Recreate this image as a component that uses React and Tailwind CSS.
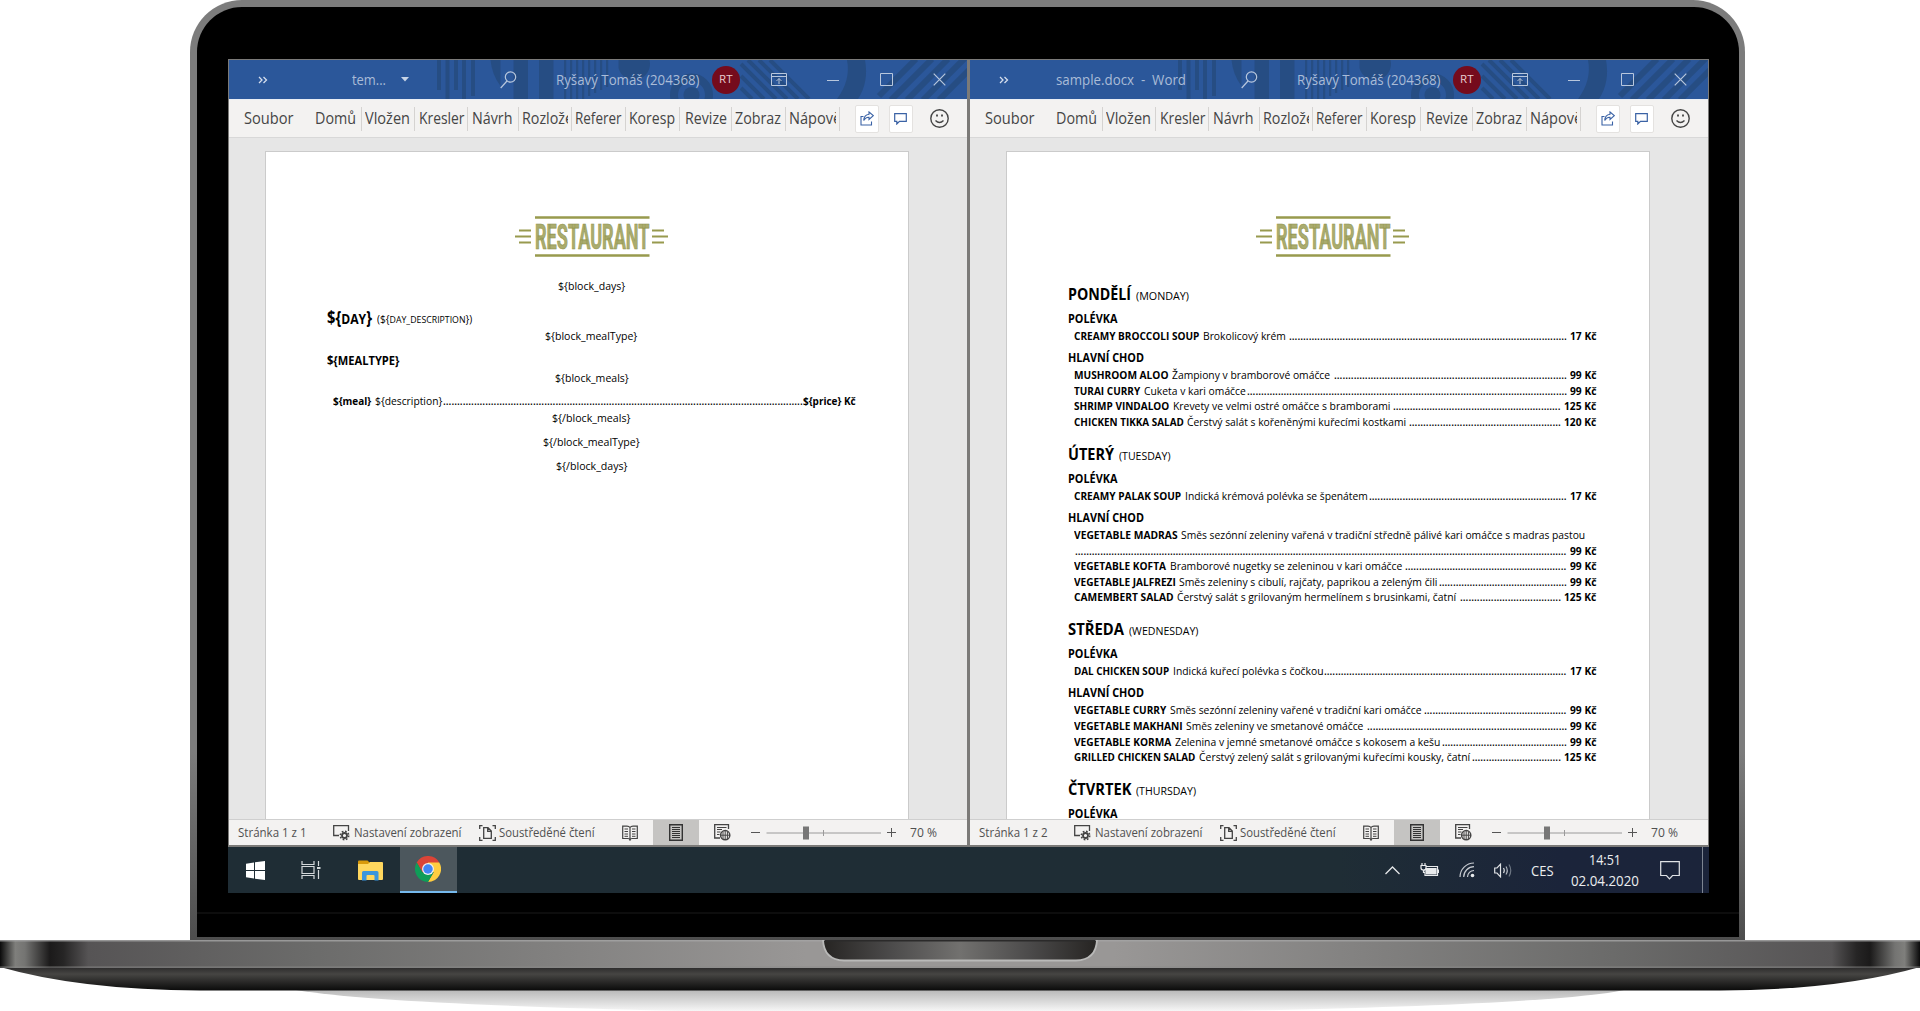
import { useLayoutEffect, useRef, useState } from "react";

/* One line of text, stretched or condensed horizontally to a given width. */
function Fit({ w, className = "", children }) {
  const ref = useRef(null);
  const [k, setK] = useState(1);
  useLayoutEffect(() => {
    const n = ref.current.getBoundingClientRect().width;
    if (n) setK((w / n) * k);
  }, [w, children]);
  return (
    <span className={"block shrink-0 whitespace-pre " + className} style={{ width: w }}>
      <span ref={ref} className="inline-block origin-left" style={{ transform: `scaleX(${k})` }}>
        {children}
      </span>
    </span>
  );
}

const FINE_LINES = [335, 341, 347, 353, 359, 365, 371, 377];

function TitlePattern() {
  return (
    <svg className="absolute inset-0" width="738" height="39" viewBox="0 0 738 39" fill="#264d83">
      <rect x="208" width="4" height="30" />
      <rect x="216.5" width="4" height="39" />
      <rect x="225" width="4" height="30" />
      <rect x="233" width="4" height="39" />
      <rect x="242" width="4" height="36" />
      <path d="M261.5 0H271.500V26Q263 15 261.500 0Z" />
      <rect x="284.500" width="14.500" height="39" />
      <rect x="310" width="14.500" height="39" />
      {FINE_LINES.map((x, i) => (
        <rect key={x} x={x} width="2.200" height={i < 4 ? 39 : 39 - (i - 3) * 3} />
      ))}
      <path d="M389.500 0H420.500A16 16 0 0 1 389.500 8Z" />
      <circle cx="462.500" cy="35" r="17.500" fill="none" stroke="#264d83" strokeWidth="8" />
      <circle cx="462.500" cy="35" r="8" />
      <g stroke="#264d83" strokeWidth="4">
        <path d="M512 4L547 39M519 0L558 39M530 0L569 39M541 0L580 39M512 16L535 39M512 28L523 39" />
      </g>
      <path d="M618 0H636Q640 22 629 39H608Q622 20 618 0Z" />
      <g stroke="#264d83" strokeWidth="6">
        <path d="M650 36L687 -1M662 40L703 -1M678 40L719 -1M694 40L738 -4M710 40L740 10" />
      </g>
    </svg>
  );
}

function TitleBar({ title }) {
  return (
    <div className="relative h-[39px] bg-[#2b579a] text-[14px] text-[#aabcd7]">
      <TitlePattern />
      <div className="relative flex h-[39px] items-center">
        <svg className="ml-[29px] mt-px" width="10" height="8" viewBox="0 0 10 8" fill="none" stroke="#d5deed" strokeWidth="1.300">
          <path d="M1 1L4 4L1 7M5.500 1L8.500 4L5.500 7" />
        </svg>
        {title ? (
          <div className="ml-[47px] flex w-[185px]">
            <Fit w={130}>{title}</Fit>
          </div>
        ) : (
          <div className="ml-[84px] flex w-[148px] items-center">
            <Fit w={34}>tem...</Fit>
            <svg className="ml-[15px]" width="8" height="5" viewBox="0 0 8 5" fill="#c8d4e6"><path d="M0 0H8L4 4.500Z" /></svg>
          </div>
        )}
        <svg width="17" height="18" viewBox="0 0 17 18" fill="none" stroke="#b8c7dd" strokeWidth="1.200">
          <circle cx="10.500" cy="6" r="5.200" />
          <path d="M7 10L0.700 17" />
        </svg>
        <Fit w={143.500} className="ml-[39px]">Ryšavý Tomáš (204368)</Fit>
        <div className="ml-[12px] flex size-[28px] items-center justify-center rounded-full bg-[#750b1c] text-[11px] text-[#e6ccd0]">
          <Fit w={13.500}>RT</Fit>
        </div>
        <svg className="ml-[31px]" width="16" height="13" viewBox="0 0 16 13" fill="none" stroke="#b8c7dd">
          <path d="M.5 .5H15.500V12.500H.5ZM.5 3.500H15.500M8 11V5.500M5.500 8L8 5.500L10.500 8" />
        </svg>
        <svg className="ml-[40px]" width="12" height="13" viewBox="0 0 12 13" stroke="#b8c7dd"><path d="M0 7.500H12" /></svg>
        <svg className="ml-[41px]" width="13" height="13" viewBox="0 0 13 13" fill="none" stroke="#b8c7dd"><path d="M.5 .5H12.500V12.500H.5Z" /></svg>
        <svg className="ml-[40px]" width="13" height="13" viewBox="0 0 13 13" fill="none" stroke="#b8c7dd" strokeWidth="1.200"><path d="M.7 .7L12.300 12.300M12.300 .7L.7 12.300" /></svg>
      </div>
    </div>
  );
}

/* label, text width, box width up to and including the separator, left padding */
const TABS = [
  ["Domů", 41, 47, 0],
  ["Vložen", 45, 53, 3.500],
  ["Kresler", 45.500, 53, 4],
  ["Návrh", 40.500, 51, 4.500],
  ["Rozlož", 43, 53, 3.500, "e"],
  ["Referer", 46.500, 54, 3.500],
  ["Koresp", 46, 54, 3.500],
  ["Revize", 42, 52, 5],
  ["Zobraz", 46, 54, 3.500],
  ["Nápov", 44, 54, 3.500, "ě"],
];

function Tabs() {
  return (
    <div className="flex h-[38px] items-center border-b border-[#d8d8d8] bg-[#f3f2f1] text-[15.500px] text-[#454545]">
      <Fit w={49.500} className="ml-[15px]">Soubor</Fit>
      <div className="ml-[21px] flex">
        {TABS.map(([label, w, box, pad, cut]) => (
          <div key={label} className="flex h-[24px] items-center border-r border-[#d5d3d1]" style={{ width: box, paddingLeft: pad }}>
            <Fit w={w}>{label}</Fit>
            {cut && <span className="w-[2.500px] overflow-hidden">{cut}</span>}
          </div>
        ))}
      </div>
      <div className="ml-[15px] flex h-[28px] w-[24px] items-center justify-center rounded-[2px] border border-[#e4e2e0] bg-white">
        <svg width="14" height="15" viewBox="0 0 14 15" fill="none" stroke="#3a62a5" strokeWidth="1.100">
          <path d="M3.500 5.500H1V14H11.500V10.500" />
          <path d="M9 1L13.300 4.700L9 8.500V6.200Q5.500 6 3.700 9.500Q4 4 9 3.300Z" />
        </svg>
      </div>
      <div className="ml-[10px] flex h-[28px] w-[24px] items-center justify-center rounded-[2px] border border-[#e4e2e0] bg-white">
        <svg width="13" height="12" viewBox="0 0 13 12" fill="none" stroke="#3a62a5" strokeWidth="1.200">
          <path d="M.7 .7H12.300V8.300H5.500L2.800 11V8.300H.7Z" />
        </svg>
      </div>
      <svg className="ml-[17px]" width="19" height="19" viewBox="0 0 19 19" fill="none" stroke="#444" strokeWidth="1.400">
        <circle cx="9.500" cy="9.500" r="8.700" />
        <path d="M5.500 11.500Q9.500 15.500 13.500 11.500" />
        <path d="M7 5.500V7.500M12 5.500V7.500" strokeWidth="1.800" />
      </svg>
    </div>
  );
}

function Logo() {
  return (
    <svg className="mx-auto block" width="153" height="41" viewBox="0 0 153 41">
      <g stroke="#989a4e" strokeWidth="2">
        <path d="M20 1.500H134.500M20 39.500H134.500" strokeWidth="2.400" />
        <path d="M4 14.500H16M0 20.500H16M4 26.500H16M137 14.500H149M137 20.500H153M137 26.500H149" />
      </g>
      <text x="20" y="33" textLength="114.500" lengthAdjust="spacingAndGlyphs" fontFamily="Roboto, sans-serif" fontWeight="700" fontSize="35" fill="#aaac6e" stroke="#90924a" strokeWidth=".7">
        RESTAURANT
      </text>
    </svg>
  );
}

/* Dotted tab leader filling the space between a text and its price. */
function Leader({ gap }) {
  const ref = useRef(null);
  const [w, setW] = useState(0);
  useLayoutEffect(() => setW(ref.current.getBoundingClientRect().width), []);
  return (
    <span ref={ref} className="block min-w-0 flex-1 font-semibold" style={{ marginLeft: gap }}>
      {w > 0 && <Fit w={w}>{".".repeat(Math.round(w / 2.8))}</Fit>}
    </span>
  );
}

function Price({ value }) {
  const long = value > 99;
  return <Fit w={long ? 32.300 : 26.500} className="ml-[3.300px] font-bold">{value + " Kč"}</Fit>;
}

function Meal({ name, nw, text, tw, gap, price }) {
  const wraps = gap === null;
  return (
    <>
      <div className="ml-[6px] flex h-[15.670px] items-center">
        <Fit w={nw} className="mr-[3.300px] font-bold">{name}</Fit>
        <Fit w={tw}>{text}</Fit>
        {!wraps && <Leader gap={gap} />}
        {!wraps && <Price value={price} />}
      </div>
      {wraps && (
        <div className="ml-[6px] flex h-[15.670px] items-center">
          <Leader gap={1} />
          <Price value={price} />
        </div>
      )}
    </>
  );
}

const MENU = [
  { day: "PONDĚLÍ", dw: 63, en: "(MONDAY)", ew: 53,
    soup: ["CREAMY BROCCOLI SOUP", 125.400, "Brokolicový krém", 82.900, 2.900, 17],
    main: [
      ["MUSHROOM ALOO", 94.500, "Žampiony v bramborové omáčce", 158.100, 3.600, 99],
      ["TURAI CURRY", 66.200, "Cuketa v kari omáčce", 101.800, 1, 99],
      ["SHRIMP VINDALOO", 95.200, "Krevety ve velmi ostré omáčce s bramborami", 217.400, 3.300, 125],
      ["CHICKEN TIKKA SALAD", 109.800, "Čerstvý salát s kořeněnými kuřecími kostkami", 219.200, 2.500, 120],
    ] },
  { day: "ÚTERÝ", dw: 46, en: "(TUESDAY)", ew: 51.500,
    soup: ["CREAMY PALAK SOUP", 107.200, "Indická krémová polévka se špenátem", 182.800, 1.500, 17],
    main: [
      ["VEGETABLE MADRAS", 103.600, "Směs sezónní zeleniny vařená v tradiční středně pálivé kari omáčce s madras pastou", 404.200, null, 99],
      ["VEGETABLE KOFTA", 92, "Bramborové nugetky se zeleninou v kari omáčce", 232.300, 3.600, 99],
      ["VEGETABLE JALFREZI", 101.800, "Směs zeleniny s cibulí, rajčaty, paprikou a zeleným čili", 258.500, 1, 99],
      ["CAMEMBERT SALAD", 99.600, "Čerstvý salát s grilovaným hermelínem s brusinkami, čatní", 279.200, 3.600, 125],
    ] },
  { day: "STŘEDA", dw: 56, en: "(WEDNESDAY)", ew: 69.500,
    soup: ["DAL CHICKEN SOUP", 95.200, "Indická kuřecí polévka s čočkou", 150.500, 1, 17],
    main: [
      ["VEGETABLE CURRY", 92.300, "Směs sezónní zeleniny vařené v tradiční kari omáčce", 251.500, 2.900, 99],
      ["VEGETABLE MAKHANI", 108.700, "Směs zeleniny ve smetanové omáčce", 177.400, 2.900, 99],
      ["VEGETABLE KORMA", 97.400, "Zelenina v jemné smetanové omáčce s kokosem a kešu", 265.400, 1.500, 99],
      ["GRILLED CHICKEN SALAD", 121.400, "Čerstvý zelený salát s grilovanými kuřecími kousky, čatní", 271.200, 1.800, 125],
    ] },
  { day: "ČTVRTEK", dw: 63.500, en: "(THURSDAY)", ew: 60, main: [] },
];

const toMeal = (m) => ({ name: m[0], nw: m[1], text: m[2], tw: m[3], gap: m[4], price: m[5] });

function MenuPage() {
  return (
    <div className="pt-[23.800px]">
      {MENU.map((d) => (
        <section key={d.day} className="mb-[10px]">
          <div className="flex h-[28px] items-baseline">
            <Fit w={d.dw} className="text-[16px] leading-[26px] font-bold">{d.day}</Fit>
            <Fit w={d.ew} className="ml-[4.500px] text-[11px]">{d.en}</Fit>
          </div>
          <Fit w={49.500} className="text-[12.500px] leading-[20px] font-bold">POLÉVKA</Fit>
          {d.soup && <Meal {...toMeal(d.soup)} />}
          {d.soup && <Fit w={76} className="mt-[3.500px] text-[12.500px] leading-[20px] font-bold">HLAVNÍ CHOD</Fit>}
          {d.main.map((m) => <Meal key={m[0]} {...toMeal(m)} />)}
        </section>
      ))}
    </div>
  );
}

function Tag({ w, children }) {
  return <Fit w={w} className="mx-auto h-[16px] leading-[16px]">{children}</Fit>;
}

function TemplatePage() {
  return (
    <div className="pt-[21.300px]">
      <Tag w={67.300}>{"${block_days}"}</Tag>
      <div className="mt-[13.500px] flex h-[20px] items-center">
        <Fit w={45} className="text-[17px] font-bold">{"${"}<span className="text-[14px]">DAY</span>{"}"}</Fit>
        <Fit w={95.300} className="mt-[2px] ml-[4.400px] text-[11px]">{"(${"}<span className="text-[9.500px]">DAY_DESCRIPTION</span>{"})"}</Fit>
      </div>
      <Tag w={92.300}>{"${block_mealType}"}</Tag>
      <Fit w={72.500} className="mt-[8px] h-[18px] text-[12.500px] leading-[18px] font-bold">{"${MEALTYPE}"}</Fit>
      <Tag w={73.800}>{"${block_meals}"}</Tag>
      <div className="mt-[8px] ml-[6px] flex h-[16px] items-center">
        <Fit w={38.200} className="mr-[3.300px] font-bold">{"${meal}"}</Fit>
        <Fit w={67.300}>{"${description}"}</Fit>
        <Leader gap={0.500} />
        <Fit w={52.700} className="ml-[0.500px] font-bold">{"${price} Kč"}</Fit>
      </div>
      <Tag w={78.500}>{"${/block_meals}"}</Tag>
      <div className="h-[8px]" />
      <Tag w={96.700}>{"${/block_mealType}"}</Tag>
      <div className="h-[8px]" />
      <Tag w={71.600}>{"${/block_days}"}</Tag>
    </div>
  );
}

function StatusBar({ page }) {
  return (
    <div className="flex h-[26px] items-center border-t border-[#cfcfcf] bg-[#f3f2f1] text-[12px] text-[#505050]">
      <Fit w={68.600} className="ml-[8.500px]">{page}</Fit>
      <svg className="ml-[27px]" width="17" height="16" viewBox="0 0 17 16" fill="none" stroke="#444" strokeWidth="1.300">
        <path d="M6 10.500H.7V.7H15.500V6" />
        <circle cx="11.500" cy="10.500" r="2.500" strokeWidth="1.800" />
        <circle cx="11.500" cy="10.500" r="4.200" strokeWidth="1.600" strokeDasharray="1.700 1.600" />
      </svg>
      <Fit w={107.500} className="ml-[3.500px]">Nastavení zobrazení</Fit>
      <svg className="ml-[18px]" width="17" height="16" viewBox="0 0 17 16" fill="none" stroke="#444" strokeWidth="1.300">
        <path d="M3.500 .7H.7V4M13.500 .7H16.300V4M3.500 15.300H.7V12M13.500 15.300H16.300V12" />
        <path d="M4.700 2.700H9L12.300 6V13.300H4.700ZM8.700 3V6.300H12" />
      </svg>
      <Fit w={95.500} className="ml-[3px]">Soustředěné čtení</Fit>
      <svg className="ml-[27px]" width="16" height="16" viewBox="0 0 16 16" fill="none" stroke="#444">
        <path d="M8 2.500Q7 1.200 5 1.200H.7V13.500H6Q7.500 13.500 8 15Q8.500 13.500 10 13.500H15.300V1.200H11Q9 1.200 8 2.500V14" strokeWidth="1.200" />
        <path d="M2.500 4H6M2.500 6.500H6M2.500 9H6M2.500 11.300H6M10 4H13.500M10 6.500H13.500M10 9H13.500M10 11.300H13.500" />
      </svg>
      <div className="ml-[15.500px] flex h-[25px] w-[46px] items-center justify-center bg-[#c5c4c2]">
        <svg width="14" height="17" viewBox="0 0 14 17" fill="none" stroke="#333">
          <path d="M.7 .7H13.300V16.300H.7Z" strokeWidth="1.400" />
          <path d="M3 3.500H11M3 5.500H11M3 7.500H11M3 9.500H11M3 11.500H11M3 13.500H11" />
        </svg>
      </div>
      <svg className="ml-[15px]" width="17" height="17" viewBox="0 0 17 17" fill="none" stroke="#444">
        <path d="M6 14H.7V.7H14.500V5" strokeWidth="1.300" />
        <path d="M3 3.500H12.500M3 5.500H8M3 8H6.500M3 10.500H5.500" />
        <circle cx="11.200" cy="11.200" r="4.600" strokeWidth="1.500" />
        <path d="M11.200 6.600V15.800M6.600 11.200H15.800M9 7.500V15M13.400 7.500V15" />
      </svg>
      <svg className="ml-[20px]" width="146" height="14" viewBox="0 0 146 14" stroke="#777">
        <path d="M0 6.500H9M136 6.500H145M140.500 2V11" stroke="#555" />
        <path d="M15.500 7H130" stroke="#9a9a9a" />
        <path d="M72.500 4V10" stroke="#9a9a9a" />
        <rect x="52" y=".5" width="6" height="13" fill="#777" stroke="none" />
      </svg>
      <Fit w={27} className="ml-[13px]">70 %</Fit>
    </div>
  );
}

function WordWindow({ title, status, children }) {
  return (
    <div className="flex h-[785px] w-[738px] shrink-0 flex-col overflow-hidden bg-[#e6e6e6]">
      <TitleBar title={title} />
      <div className="h-px bg-[#e9edf4]" />
      <Tabs />
      <div className="min-h-0 flex-1 overflow-hidden">
        <div className="mt-[13px] ml-[36px] h-[800px] w-[644px] border border-[#cbcbcb] bg-white pt-[64px] pr-[52.500px] pl-[61.300px] font-['Open_Sans','Noto_Sans',sans-serif] text-[10.300px] text-black">
          <Logo />
          {children}
        </div>
      </div>
      <StatusBar page={status} />
    </div>
  );
}

function Taskbar() {
  return (
    <div className="flex h-[46px] items-center bg-linear-to-r from-[#1f2d35] from-75% to-[#1b243a] to-90% text-[14px] text-[#eceef0]">
      <svg className="ml-[18px]" width="19" height="19" viewBox="0 0 19 19" fill="#fff">
        <path d="M0 2.700L8 1.500V9H0ZM9 1.300L19 0V9H9ZM0 10H8V17.500L0 16.300ZM9 10H19V19L9 17.700Z" />
      </svg>
      <svg className="ml-[36px]" width="20" height="18" viewBox="0 0 20 18" fill="none" stroke="#d5d9db" strokeWidth="1.200">
        <path d="M1 0V3.500H13V0M1 5.500H13V12.500H1ZM1 18V14.500H13V18M17.500 0V5M17.500 9V18" />
        <path d="M16 7H19.500" strokeWidth="2" />
      </svg>
      <svg className="ml-[37px]" width="25" height="21" viewBox="0 0 25 21">
        <path d="M0 1.500Q0 .5 1 .5H9.500L11.500 2.500V6H0Z" fill="#d99a0b" />
        <path d="M0 4H10L12 2H24Q25 2 25 3V19Q25 20 24 20H1Q0 20 0 19Z" fill="#ffd75e" />
        <path d="M4 12.500Q4 11 5.500 11H19Q20.500 11 20.500 12.500V20.500H16.500V16Q16.500 15 15.500 15H9.500Q8.500 15 8.500 16V20.500H4Z" fill="#3a96dd" />
      </svg>
      <div className="ml-[17px] flex h-[46px] w-[57px] items-center justify-center border-b-2 border-[#76b9ed] bg-[#4c575d] pr-px">
        <svg width="26" height="26" viewBox="0 0 48 48">
          <path d="M3.200 12A24 24 0 0 1 44.800 12L24 24L13.600 30Z" fill="#db4437" />
          <path d="M44.800 12A24 24 0 0 1 24 48L34.400 30L24 24V12Z" fill="#ffcd40" />
          <path d="M3.200 12A24 24 0 0 0 24 48L34.400 30H13.600Z" fill="#0f9d58" />
          <circle cx="24" cy="24" r="11" fill="#f1f1f1" />
          <circle cx="24" cy="24" r="8.800" fill="#4285f4" />
        </svg>
      </div>
      <svg className="ml-[928px]" width="15" height="9" viewBox="0 0 15 9" fill="none" stroke="#e4e6e8" strokeWidth="1.300"><path d="M.5 8L7.500 1L14.500 8" /></svg>
      <svg className="ml-[20px]" width="19" height="14" viewBox="0 0 19 14" fill="none" stroke="#e8eaec" strokeWidth="1.200">
        <path d="M5 3.500H17.500V12.500H5Z" />
        <path d="M6.500 5.500H16V11H6.500Z" fill="#e8eaec" />
        <path d="M18.500 6.500V10" />
        <path d="M1 2.500H6V5Q6 7 3.500 7Q1 7 1 5ZM2 0V2.500M5 0V2.500M3.500 7V9.500H5" fill="#1b2838" />
      </svg>
      <svg className="ml-[20px]" width="16" height="16" viewBox="0 0 16 16" fill="none" stroke="#c8ccd2" strokeWidth="1.200">
        <path d="M1 15A14 14 0 0 1 15 1M4.700 15A10.300 10.300 0 0 1 15 4.700M8.500 15A6.500 6.500 0 0 1 15 8.500" />
        <circle cx="13.500" cy="13.500" r="1.800" fill="#e8eaec" stroke="none" />
      </svg>
      <svg className="ml-[19px]" width="18" height="15" viewBox="0 0 18 15" fill="none" stroke="#e0e3e6" strokeWidth="1.200">
        <path d="M.7 5H3L6.500 1.200V13.800L3 10H.7ZM9.500 5Q11 7.500 9.500 10" />
        <path d="M12 3.500Q14.500 7.500 12 11.500" stroke="#b4b9c1" />
        <path d="M15 1.500Q18.500 7.500 15 13.500" stroke="#6d7683" />
      </svg>
      <Fit w={22.500} className="ml-[19px] text-[14px]">CES</Fit>
      <div className="ml-[17px] flex w-[68px] flex-col items-center text-[14px] leading-[21.500px]">
        <Fit w={32}>14:51</Fit>
        <Fit w={68}>02.04.2020</Fit>
      </div>
      <svg className="ml-[21px]" width="20" height="19" viewBox="0 0 20 19" fill="none" stroke="#e0e3e6" strokeWidth="1.200">
        <path d="M.7 .7H19.300V14.500H12.500L9.500 17.800L6.500 14.500H.7Z" />
      </svg>
      <div className="ml-[22px] h-[46px] w-px bg-[#7d8592]" />
    </div>
  );
}

function LaptopBase() {
  return (
    <svg className="block" width="1920" height="71" viewBox="0 0 1920 71">
      <defs>
        <linearGradient id="deck">
          <stop offset="0" stopColor="#0a0a0a" />
          <stop offset=".008" stopColor="#7f7f7c" />
          <stop offset=".013" stopColor="#747472" />
          <stop offset=".026" stopColor="#1b1a1a" />
          <stop offset=".033" stopColor="#262525" />
          <stop offset=".046" stopColor="#565455" />
          <stop offset=".16" stopColor="#6b6b6a" />
          <stop offset=".42" stopColor="#999796" />
          <stop offset=".58" stopColor="#999796" />
          <stop offset=".84" stopColor="#6b6b6a" />
          <stop offset=".954" stopColor="#565455" />
          <stop offset=".967" stopColor="#262525" />
          <stop offset=".974" stopColor="#1b1a1a" />
          <stop offset=".987" stopColor="#747472" />
          <stop offset=".992" stopColor="#7f7f7c" />
          <stop offset="1" stopColor="#0a0a0a" />
        </linearGradient>
        <linearGradient id="under" x2="0" y2="1">
          <stop offset="0" stopColor="#2b2a2a" />
          <stop offset=".3" stopColor="#464543" />
          <stop offset="1" stopColor="#0a0a0a" />
        </linearGradient>
        <linearGradient id="notch">
          <stop offset="0" stopColor="#262422" />
          <stop offset=".25" stopColor="#4c4b4b" />
          <stop offset=".5" stopColor="#72716f" />
          <stop offset=".75" stopColor="#4c4b4b" />
          <stop offset="1" stopColor="#262422" />
        </linearGradient>
        <linearGradient id="shade" x2="0" y2="1">
          <stop offset="0" stopColor="#b8b8b8" />
          <stop offset="1" stopColor="#f6f6f6" />
        </linearGradient>
      </defs>
      <path d="M296 50H1624Q1560 64 1240 71H680Q380 64 296 50Z" fill="url(#shade)" />
      <path d="M0 27H1920Q1840 50 1720 50.500H200Q80 50 0 27Z" fill="url(#under)" />
      <rect width="1920" height="28" fill="url(#deck)" />
      <rect width="1920" height="1.500" fill="#a5a5a5" opacity=".8" />
      <rect y="26.500" width="1920" height="1.200" fill="#8c8c8a" opacity=".7" />
      <path d="M823 0H1097Q1096 20 1076 20.500H844Q824 20 823 0Z" fill="url(#notch)" stroke="#b9b9b8" strokeWidth="1.800" />
      <rect x="824.500" y="0" width="271" height="1.500" fill="#2b2a2a" />
    </svg>
  );
}

export default function App() {
  return (
    <div className="h-[1011px] w-[1920px] overflow-hidden bg-white font-['Open_Sans','Noto_Sans',sans-serif]">
      <div className="ml-[190px] h-[940px] w-[1555px] rounded-t-[52px] bg-linear-to-b from-[#7c7c7c] from-80% to-[#4d4d4d] px-[6.500px] pt-[6.500px] pb-[3px]">
        <div className="flex h-full flex-col rounded-t-[45px] bg-black">
          <div className="mt-[52.500px] ml-[31.500px] w-[1481px]">
            <div className="flex border-t border-r border-b-2 border-l border-[#7b7a78] bg-[#7b7a78]">
              <WordWindow status="Stránka 1 z 1">
                <TemplatePage />
              </WordWindow>
              <div className="w-[3px] shrink-0" />
              <WordWindow title="sample.docx  -  Word" status="Stránka 1 z 2">
                <MenuPage />
              </WordWindow>
            </div>
            <Taskbar />
          </div>
          <div className="mt-[19px] h-[2px] bg-[#0d0d0d]" />
        </div>
      </div>
      <LaptopBase />
    </div>
  );
}
